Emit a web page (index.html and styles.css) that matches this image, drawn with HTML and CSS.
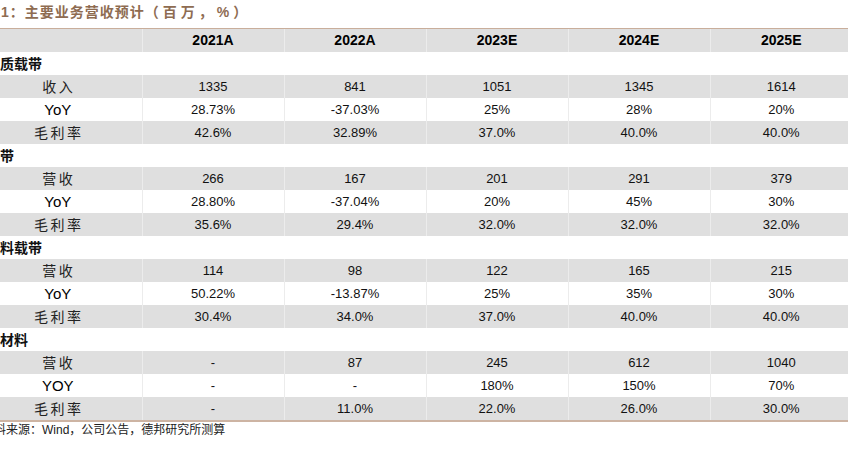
FILE: index.html
```html
<!DOCTYPE html>
<html lang="zh">
<head>
<meta charset="utf-8">
<link rel="stylesheet" href="styles.css">
</head>
<body>
<div class="page">
  <div class="title">图表1：主要业务营收预计<span class="title-unit">（百万，%）</span></div>
  <table class="grid">
    <colgroup>
      <col class="c-label"><col class="c-val"><col class="c-val"><col class="c-val"><col class="c-val"><col class="c-val">
    </colgroup>
    <thead>
      <tr class="head"><th></th><th>2021A</th><th>2022A</th><th>2023E</th><th>2024E</th><th>2025E</th></tr>
    </thead>
    <tbody>
      <tr class="sec"><td class="sec-name" colspan="6">纸质载带</td></tr>
      <tr class="g"><td class="lab cn">收入</td><td>1335</td><td>841</td><td>1051</td><td>1345</td><td>1614</td></tr>
      <tr class="w"><td class="lab en">YoY</td><td>28.73%</td><td>-37.03%</td><td>25%</td><td>28%</td><td>20%</td></tr>
      <tr class="g"><td class="lab cn">毛利率</td><td>42.6%</td><td>32.89%</td><td>37.0%</td><td>40.0%</td><td>40.0%</td></tr>

      <tr class="sec"><td class="sec-name" colspan="6">胶带</td></tr>
      <tr class="g"><td class="lab cn">营收</td><td>266</td><td>167</td><td>201</td><td>291</td><td>379</td></tr>
      <tr class="w"><td class="lab en">YoY</td><td>28.80%</td><td>-37.04%</td><td>20%</td><td>45%</td><td>30%</td></tr>
      <tr class="g"><td class="lab cn">毛利率</td><td>35.6%</td><td>29.4%</td><td>32.0%</td><td>32.0%</td><td>32.0%</td></tr>

      <tr class="sec"><td class="sec-name" colspan="6">塑料载带</td></tr>
      <tr class="g"><td class="lab cn">营收</td><td>114</td><td>98</td><td>122</td><td>165</td><td>215</td></tr>
      <tr class="w"><td class="lab en">YoY</td><td>50.22%</td><td>-13.87%</td><td>25%</td><td>35%</td><td>30%</td></tr>
      <tr class="g"><td class="lab cn">毛利率</td><td>30.4%</td><td>34.0%</td><td>37.0%</td><td>40.0%</td><td>40.0%</td></tr>

      <tr class="sec"><td class="sec-name" colspan="6">新材料</td></tr>
      <tr class="g"><td class="lab cn">营收</td><td>-</td><td>87</td><td>245</td><td>612</td><td>1040</td></tr>
      <tr class="w"><td class="lab en">YOY</td><td>-</td><td>-</td><td>180%</td><td>150%</td><td>70%</td></tr>
      <tr class="g last"><td class="lab cn">毛利率</td><td>-</td><td>11.0%</td><td>22.0%</td><td>26.0%</td><td>30.0%</td></tr>
    </tbody>
  </table>
  <div class="source">资料来源：Wind，公司公告，德邦研究所测算</div>
</div>
</body>
</html>
```

FILE: styles.css
```css
html, body {
  margin: 0;
  padding: 0;
  background: #ffffff;
}
body {
  width: 848px;
  height: 449px;
  overflow: hidden;
  font-family: "Liberation Sans", Arial, "Noto Sans CJK SC", sans-serif;
  color: #111;
}
.page {
  width: 848px;
  overflow: hidden;
}
.title {
  margin-left: -29px;
  height: 28px;
  line-height: 24px;
  font-family: "Liberation Sans", "Noto Sans CJK SC", sans-serif;
  font-size: 14px;
  font-weight: bold;
  color: #8e6c52;
  letter-spacing: 1px;
  white-space: nowrap;
  border-bottom: 1px solid #c9ae9b;
  width: 900px;
}
.title-unit {
  letter-spacing: 4px;
}
.grid {
  margin-left: -26px;
  border-collapse: collapse;
  table-layout: fixed;
  width: 878px;
}
.c-label { width: 168px; }
.c-val { width: 142px; }
.grid th, .grid td {
  height: 23px;
  padding: 0;
  text-align: center;
  vertical-align: middle;
  font-size: 13px;
  line-height: 23px;
  white-space: nowrap;
}
.grid th + th, .grid td + td {
  border-left: 1px solid #ececec;
}
.head th {
  background: #dfdfdf;
  font-weight: bold;
  font-size: 14px;
  color: #000;
}
.g td { background: #dfdfdf; }
.w td { background: #ffffff; }
.sec td { background: #ffffff; }
.sec-name {
  text-align: left !important;
  padding-left: 12px !important;
  font-family: "Noto Sans CJK SC", sans-serif;
  font-weight: bold;
  font-size: 14px !important;
  color: #111;
}
.lab.cn {
  font-family: "Noto Sans CJK SC", sans-serif;
  font-size: 14px;
  letter-spacing: 2.5px;
  padding-left: 2px;
  color: #222;
}
.lab.en {
  font-size: 15px;
  color: #000;
}
.last td { border-bottom: 2px solid #cdb4a3; }
.source {
  margin-left: -18px;
  font-family: "Liberation Sans", "Noto Sans CJK SC", sans-serif;
  font-size: 12px;
  line-height: 16px;
  color: #222;
  white-space: nowrap;
  width: 900px;
}
```
